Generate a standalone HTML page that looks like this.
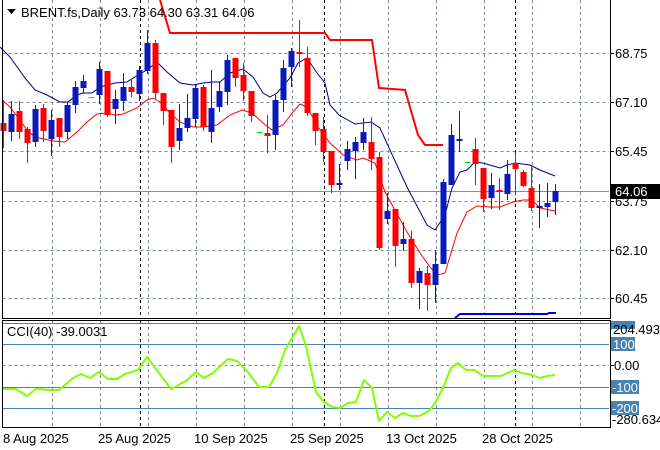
<!DOCTYPE html>
<html><head><meta charset="utf-8"><style>
html,body{margin:0;padding:0;background:#fff;width:660px;height:450px;overflow:hidden}
svg{display:block;font-family:"Liberation Sans",sans-serif}
</style></head><body>
<svg width="660" height="450" viewBox="0 0 660 450" xmlns="http://www.w3.org/2000/svg">
<rect width="660" height="450" fill="#fff"/>
<g stroke="#7b8a9a" stroke-width="1" stroke-dasharray="3,3" fill="none">
<path d="M2.5 53.5H609M2.5 102.5H609M2.5 151.5H609M2.5 201.5H609M2.5 250.5H609M2.5 298.5H609M2.5 365.5H609"/>
<path d="M52.5 0V318M100.5 0V318M148.5 0V318M196.5 0V318M244.5 0V318M292.5 0V318M340.5 0V318M388.5 0V318M436.5 0V318M484.5 0V318M532.5 0V318M580.5 0V318"/>
<path d="M52.5 321V427M100.5 321V427M148.5 321V427M196.5 321V427M244.5 321V427M292.5 321V427M340.5 321V427M388.5 321V427M436.5 321V427M484.5 321V427M532.5 321V427M580.5 321V427"/>
</g>
<g stroke="#000" stroke-width="1" stroke-dasharray="3,3" fill="none">
<path d="M140.5 0V318M324.5 0V318M515.5 0V318M140.5 321V427M324.5 321V427M515.5 321V427"/>
</g>
<path d="M2.5 191.5H609" stroke="#8090a0" stroke-width="1"/>
<g stroke="#4682b4" stroke-width="1">
<path d="M2.5 323.5H609M2.5 344.5H609M2.5 387.5H609M2.5 408.5H609"/>
</g>
<polyline fill="none" stroke="#000080" stroke-width="1" points="0,47 10,57 25,78 35,90 47,95 60,102 68,102 77,95 83,93 92,93 100,87 115,83 127,82 138,75 147,70 157,62 167,72 180,83 193,85 203,83 213,82 220,82 230,73 243,69 253,77 263,93 270,97 277,93 290,78 298,63 307,58 317,73 325,83 330,105 339,115 355,124 371,122 380,128 390,150 407,187 427,225 435,230 445,215 452,188 460,172 467,170 475,162 483,163 500,168 507,165 515,163 530,165 540,170 555,176"/>
<polyline fill="none" stroke="#ff0000" stroke-width="1" points="2,100 10,107 27,130 35,137 53,141 65,142 77,132 87,122 97,114 107,113 115,115 123,114 137,108 147,100 153,98 160,102 170,113 180,122 193,127 203,127 217,125 230,115 242,110 252,113 263,123 272,130 283,125 293,112 300,104 307,107 318,127 330,143 343,155 357,160 363,158 375,163 385,192 407,232 420,253 430,267 437,275 445,273 457,233 467,212 477,206 490,207 500,207 513,202 523,200 532,200 540,208 555,211"/>
<polyline fill="none" stroke="#ff0000" stroke-width="2" points="160,0 170,33 325,33 330,40 372,40 379,88 405,90 418,135 425,145 443,145"/>
<polyline fill="none" stroke="#0000dd" stroke-width="2" points="455,318 460,314 547,314 549,313 556,313"/>
<g stroke-width="1" transform="translate(0.5,0)">
<g stroke="#ff0000" fill="#ff0000">
<path d="M3 100V148M19 101V139M27 127V163M43 104V142M59 118V147M107 71V117M131 79V97M155 40V100M163 93V125M171 110V163M203 85V131M235 58V87M243 63V101M251 91V122M267 115V153M299 20V67M307 47V116M315 113V145M323 117V162M331 151V193M371 117V170M379 152V250M395 209V267M411 231V288M427 266V311M475 138V185M483 168V212M499 178V210M515 153V195M523 170V187M531 166V211"/>
<g stroke="none">
<rect x="0" y="123" width="6" height="8"/><rect x="16" y="111" width="6" height="21"/><rect x="24" y="129" width="6" height="14"/><rect x="40" y="108" width="6" height="23"/><rect x="56" y="118" width="6" height="19"/><rect x="104" y="71" width="6" height="44"/><rect x="128" y="87" width="6" height="5"/><rect x="152" y="43" width="6" height="50"/><rect x="160" y="93" width="6" height="18"/><rect x="168" y="110" width="6" height="37"/><rect x="200" y="87" width="6" height="40"/><rect x="232" y="58" width="6" height="20"/><rect x="240" y="75" width="6" height="16"/><rect x="248" y="91" width="6" height="25"/><rect x="264" y="133" width="6" height="3"/><rect x="296" y="52" width="6" height="2"/><rect x="304" y="58" width="6" height="55"/><rect x="312" y="113" width="6" height="18"/><rect x="320" y="129" width="6" height="23"/><rect x="328" y="151" width="6" height="34"/><rect x="368" y="142" width="6" height="17"/><rect x="376" y="157" width="6" height="91"/><rect x="392" y="209" width="6" height="37"/><rect x="408" y="239" width="6" height="44"/><rect x="424" y="273" width="6" height="12"/><rect x="472" y="149" width="6" height="15"/><rect x="480" y="168" width="6" height="31"/><rect x="496" y="190" width="6" height="2"/><rect x="512" y="163" width="6" height="6"/><rect x="520" y="172" width="6" height="14"/><rect x="528" y="188" width="6" height="20"/>
</g></g>
<g stroke="#0a1ab8" fill="#0a1ab8">
<path d="M11 101V141M35 105V147M51 110V156M67 102V139M75 81V113M83 75V93M99 62V104M115 90V124M123 73V111M139 66V101M147 30V74M179 104V150M187 94V132M195 85V127M211 70V143M219 82V112M227 55V105M275 95V150M283 60V112M291 48V87M339 164V190M347 141V170M355 137V179M363 118V150M387 193V224M403 222V251M419 268V309M435 250V303M443 179V264M451 124V185M459 111V152M491 173V209M507 160V200M539 184V228M547 183V217M555 184V215"/>
<g stroke="none">
<rect x="8" y="114" width="6" height="18"/><rect x="32" y="109" width="6" height="33"/><rect x="48" y="120" width="6" height="19"/><rect x="64" y="105" width="6" height="27"/><rect x="72" y="87" width="6" height="18"/><rect x="80" y="81" width="6" height="7"/><rect x="96" y="69" width="6" height="26"/><rect x="112" y="99" width="6" height="10"/><rect x="120" y="87" width="6" height="14"/><rect x="136" y="70" width="6" height="24"/><rect x="144" y="43" width="6" height="28"/><rect x="176" y="128" width="6" height="13"/><rect x="184" y="118" width="6" height="10"/><rect x="192" y="88" width="6" height="31"/><rect x="208" y="108" width="6" height="24"/><rect x="216" y="91" width="6" height="16"/><rect x="224" y="60" width="6" height="32"/><rect x="272" y="100" width="6" height="35"/><rect x="280" y="68" width="6" height="32"/><rect x="288" y="51" width="6" height="16"/><rect x="336" y="183" width="6" height="2"/><rect x="344" y="149" width="6" height="12"/><rect x="352" y="142" width="6" height="9"/><rect x="360" y="132" width="6" height="11"/><rect x="384" y="211" width="6" height="8"/><rect x="400" y="239" width="6" height="5"/><rect x="416" y="271" width="6" height="12"/><rect x="432" y="264" width="6" height="21"/><rect x="440" y="182" width="6" height="82"/><rect x="448" y="135" width="6" height="50"/><rect x="456" y="139" width="6" height="2"/><rect x="488" y="185" width="6" height="13"/><rect x="504" y="174" width="6" height="20"/><rect x="536" y="206" width="6" height="2"/><rect x="544" y="203" width="6" height="4"/><rect x="552" y="191" width="6" height="11"/>
</g></g>
<g stroke="#00dd00"><path d="M88 97.5H94M256 132.5H262M464 162.5H470"/></g>
</g>
<polyline fill="none" stroke="#7fff00" stroke-width="2" stroke-linejoin="round" points="3,389 16,389 27,396 36,389 51,390 59,390 73,378 81,374 90,378 99,372 108,379 117,379 125,374 138,370 147,357 171,389 186,381 196,372 204,378 213,373 228,359 237,361 247,371 259,387 269,387 277,373 285,350 299,326 306,346 316,392 324,402 332,407 340,408 348,403 356,402 364,380 372,388 379,421 387,412 395,418 403,413 411,416 419,416 429,411 435,403 443,388 451,368 458,363 466,370 474,370 483,376 501,376 514,370 522,373 532,375 540,378 547,376 555,375"/>
<g stroke="#000" stroke-width="1" fill="none">
<path d="M2.5 0V318.5H610.5V0"/>
<rect x="2.5" y="320.5" width="608" height="107"/>
</g>
<g stroke="#000"><path d="M610 53.5h4M610 102.5h4M610 151.5h4M610 201.5h4M610 250.5h4M610 298.5h4M610 365.5h4"/></g>
<g font-size="13" fill="#000">
<text x="615" y="58">68.75</text>
<text x="615" y="107">67.10</text>
<text x="615" y="156">65.45</text>
<text x="615" y="206">63.75</text>
<text x="615" y="255">62.10</text>
<text x="615" y="303">60.45</text>
</g>
<rect x="611" y="184" width="49" height="15" fill="#000"/>
<text x="615" y="196" font-size="13" fill="#fff">64.06</text>
<rect x="611" y="321" width="24" height="8" fill="#4682b4"/>
<rect x="611" y="337" width="24" height="14" fill="#4682b4"/>
<rect x="611" y="380" width="28" height="14" fill="#4682b4"/>
<rect x="611" y="401" width="28" height="14" fill="#4682b4"/>
<g font-size="13">
<text x="613" y="334" fill="#000">204.493</text>
<text x="613" y="349" fill="#fff">100</text>
<text x="614" y="370" fill="#000">0.00</text>
<text x="612" y="392" fill="#fff">-100</text>
<text x="612" y="413" fill="#fff">-200</text>
<text x="612" y="424" fill="#000">-280.634</text>
</g>
<g font-size="13" fill="#000">
<path d="M7 9h9l-4.5 5z" fill="#000"/>
<text x="21" y="17">BRENT.fs,Daily  63.73 64.30 63.31 64.06</text>
<text x="7" y="336">CCI(40) -39.0031</text>
<text x="3" y="443">8 Aug 2025</text>
<text x="98" y="443">25 Aug 2025</text>
<text x="194" y="443">10 Sep 2025</text>
<text x="290" y="443">25 Sep 2025</text>
<text x="386" y="443">13 Oct 2025</text>
<text x="482" y="443">28 Oct 2025</text>
</g>
</svg>
</body></html>
